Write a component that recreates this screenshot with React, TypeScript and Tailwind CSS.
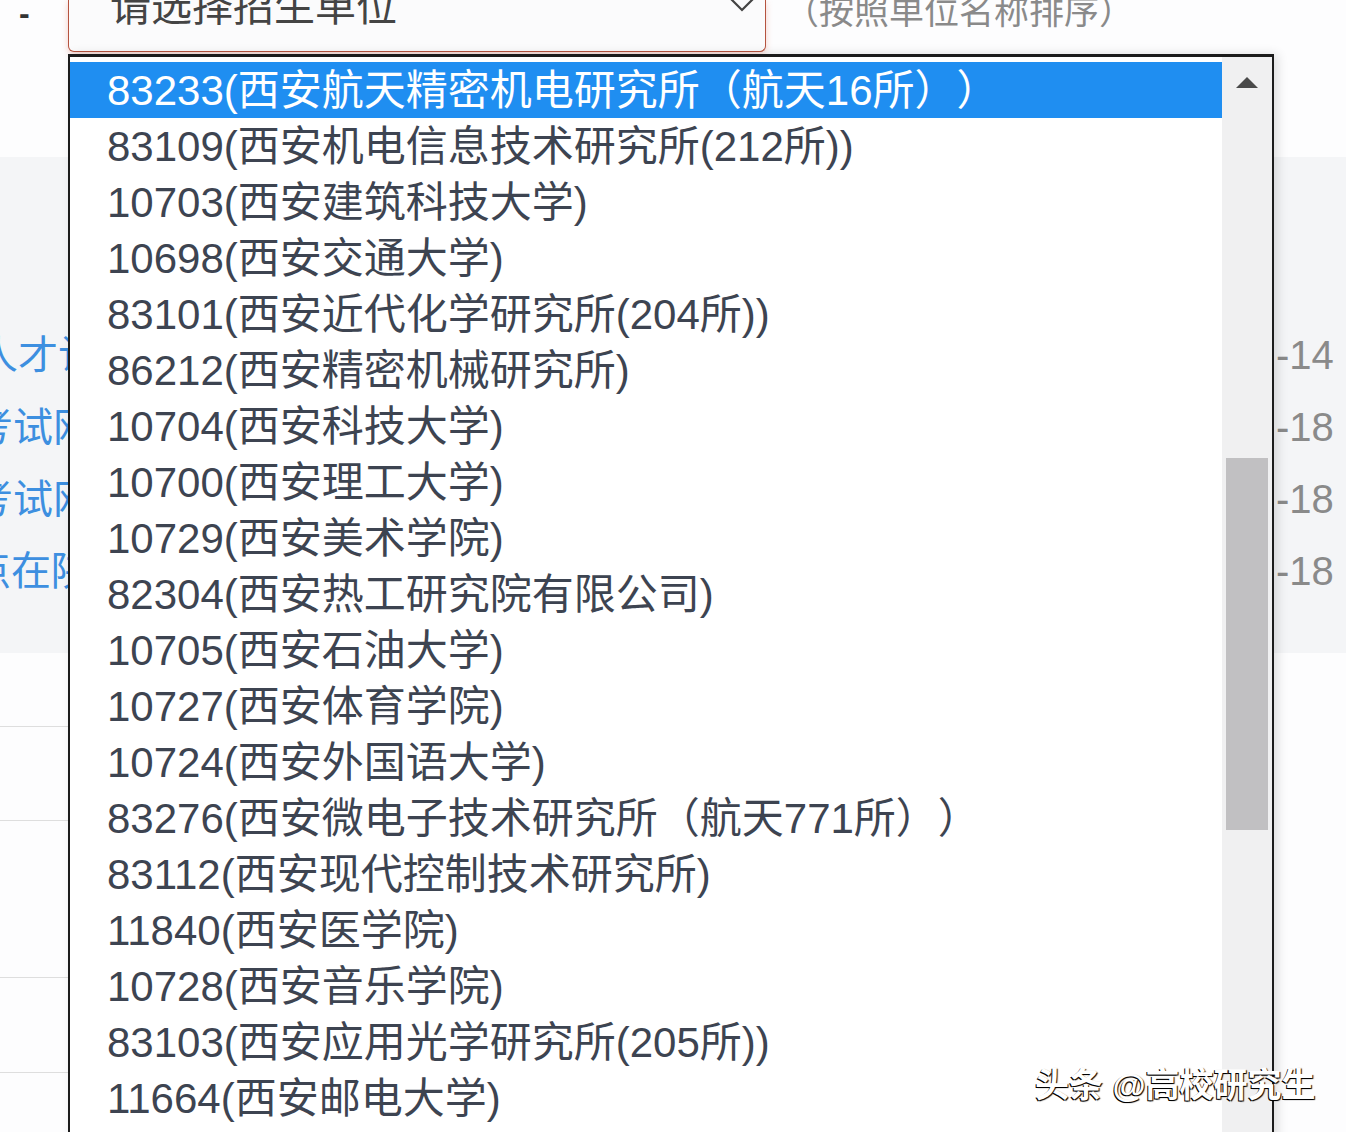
const units = [
  '83233(西安航天精密机电研究所（航天16所））',
  '83109(西安机电信息技术研究所(212所))',
  '10703(西安建筑科技大学)',
  '10698(西安交通大学)',
  '83101(西安近代化学研究所(204所))',
  '86212(西安精密机械研究所)',
  '10704(西安科技大学)',
  '10700(西安理工大学)',
  '10729(西安美术学院)',
  '82304(西安热工研究院有限公司)',
  '10705(西安石油大学)',
  '10727(西安体育学院)',
  '10724(西安外国语大学)',
  '83276(西安微电子技术研究所（航天771所））',
  '83112(西安现代控制技术研究所)',
  '11840(西安医学院)',
  '10728(西安音乐学院)',
  '83103(西安应用光学研究所(205所))',
  '11664(西安邮电大学)',
];

const leftLinks = [
  { text: '引进人才认定', offset: '-ml-[102px]' },
  { text: '研究生考试网', offset: '-ml-[147px]' },
  { text: '研究生考试网', offset: '-ml-[147px]' },
  { text: '招生站点在陕西', offset: '-ml-[149px]' },
];

const rightValues = ['-14', '-18', '-18', '-18'];

export default function App() {
  return (
    <div className="relative w-[1346px] h-[1132px] overflow-hidden bg-[#fdfdfe] font-['Liberation_Sans','Noto_Sans_CJK_SC',sans-serif]">

      {/* Top: select box + hint */}
      <div className="flex items-start h-[157px]">
        <div className="w-[68px] pl-[19px] -mt-[3px] text-[32px] leading-none font-bold text-[#333]">-</div>
        <div className="relative w-[698px] h-[52px] overflow-hidden border-x border-b border-[#b5533f] rounded-b-md shadow-[0_2px_6px_rgba(230,120,100,0.35)] bg-[#fbfbfc]">
          <div className="pl-[41px] -mt-[13px] text-[41px] leading-[41px] text-[#444]">请选择招生单位</div>
          <svg className="absolute left-[659px] -top-[3px]" width="28" height="16" viewBox="0 0 28 16">
            <path d="M2 1 L14 13 L26 1" fill="none" stroke="#444" strokeWidth="2.2" />
          </svg>
        </div>
        <div className="ml-[18px] -mt-[6px] text-[35px] leading-none text-[#8a8a8a]">（按照单位名称排序）</div>
      </div>

      {/* Gray band behind the list */}
      <div className="flex justify-between h-[496px] bg-[#f4f5f7]">
        <div className="w-[68px] overflow-hidden pt-[162px]">
          {leftLinks.map((l, i) => (
            <div key={i} className={`h-[72px] leading-[72px] text-[40px] text-[#3d8fe0] whitespace-nowrap ${l.offset}`}>
              {l.text}
            </div>
          ))}
        </div>
        <div className="w-[72px] overflow-hidden pt-[162px] pl-[2px]">
          {rightValues.map((v, i) => (
            <div key={i} className="h-[72px] leading-[72px] text-[40px] text-[#8a8a8a]">{v}</div>
          ))}
        </div>
      </div>

      {/* Lower table rows */}
      <div className="w-[68px]">
        <div className="h-[74px] border-b border-[#dedede]" />
        <div className="h-[94px] border-b border-[#dedede]" />
        <div className="h-[157px] border-b border-[#dedede]" />
        <div className="h-[95px] border-b border-[#dedede]" />
      </div>

      {/* Open dropdown list */}
      <div className="absolute left-[68px] top-[54px] w-[1206px] h-[1100px] flex bg-white border-t-[3px] border-x-2 border-[#1c1c1c] shadow-[4px_0_10px_rgba(0,0,0,0.12)]">
        <div className="flex-1 pt-[5px] [text-spacing-trim:space-all]">
          {units.map((u, i) => (
            <div
              key={u}
              className={`h-[56px] leading-[58px] pl-[37px] text-[42px] whitespace-pre ${i === 0 ? 'bg-[#1f8ef1] text-white' : 'text-[#3d4451]'}`}
            >
              {u}
            </div>
          ))}
        </div>
        <div className="w-[50px] bg-[#f0f0f1] flex flex-col items-center">
          <div className="mt-[20px] w-0 h-0 border-x-[11px] border-x-transparent border-b-[11px] border-b-[#4a4a4a]" />
          <div className="mt-[370px] w-[42px] h-[372px] bg-[#c1c0c2]" />
        </div>
      </div>

      {/* Watermark */}
      <div className="absolute left-[1035px] top-[1067px] text-[34px] leading-[36px] font-bold text-white [text-shadow:-1px_1px_0_#000,1px_1px_1px_#000]">
        头条 @高校研究生
      </div>
    </div>
  );
}
